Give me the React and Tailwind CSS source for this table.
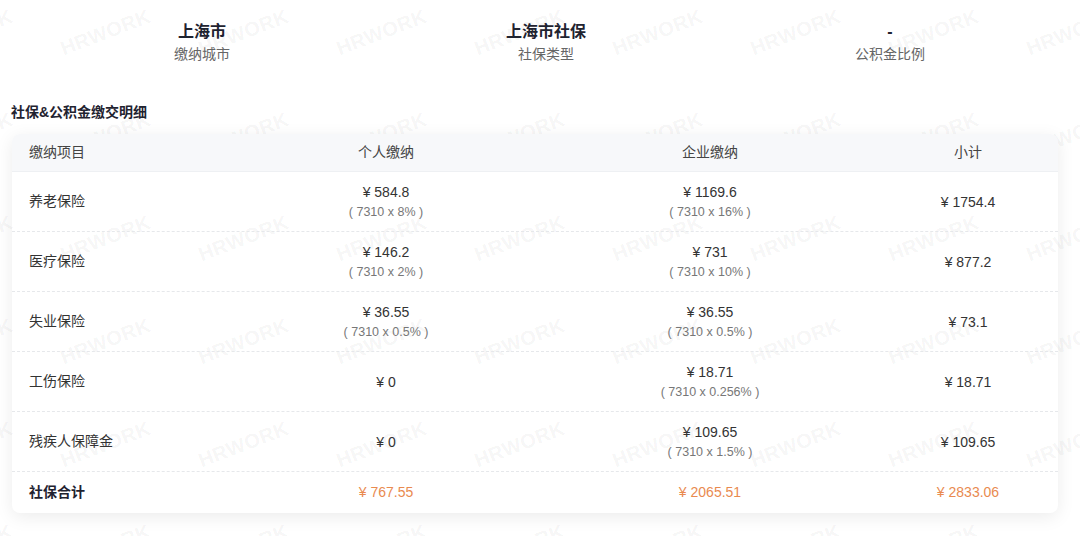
import React from 'react';

const summary = [
  { value: '上海市', label: '缴纳城市' },
  { value: '上海市社保', label: '社保类型' },
  { value: '-', label: '公积金比例' },
];

const rows = [
  { name: '养老保险', p: '¥ 584.8', pf: '( 7310 x 8% )', c: '¥ 1169.6', cf: '( 7310 x 16% )', s: '¥ 1754.4' },
  { name: '医疗保险', p: '¥ 146.2', pf: '( 7310 x 2% )', c: '¥ 731', cf: '( 7310 x 10% )', s: '¥ 877.2' },
  { name: '失业保险', p: '¥ 36.55', pf: '( 7310 x 0.5% )', c: '¥ 36.55', cf: '( 7310 x 0.5% )', s: '¥ 73.1' },
  { name: '工伤保险', p: '¥ 0', c: '¥ 18.71', cf: '( 7310 x 0.256% )', s: '¥ 18.71' },
  { name: '残疾人保障金', p: '¥ 0', c: '¥ 109.65', cf: '( 7310 x 1.5% )', s: '¥ 109.65' },
];

const cols = 'grid grid-cols-[218px_312px_336px_180px]';

const Amount = ({ value, formula }) => (
  <div className="flex flex-col items-center justify-center">
    <span className="text-[14px] leading-5 text-[#333]">{value}</span>
    {formula && <span className="text-[12.5px] leading-5 text-[#777]">{formula}</span>}
  </div>
);

// faint tiled watermark sitting behind the page content
const Watermark = () => (
  <div aria-hidden="true" className="absolute left-[-102px] top-[-20px] grid grid-cols-[repeat(9,138px)] auto-rows-[103px] pointer-events-none select-none">
    {Array.from({ length: 54 }).map((_, i) => (
      <div key={i} className="flex items-center justify-center">
        <span className="rotate-[-21deg] text-[20px] font-bold tracking-[0.5px] text-black/[0.05] font-['Liberation_Sans',sans-serif]">
          HRWORK
        </span>
      </div>
    ))}
  </div>
);

export default function App() {
  return (
    <div className="relative w-full h-[536px] overflow-hidden bg-white font-['Liberation_Sans','Noto_Sans_CJK_SC',sans-serif]">
      <Watermark />

      <div className="relative">
        {/* top summary */}
        <div className="ml-[30px] w-[1032px] grid grid-cols-3 pt-[20px]">
          {summary.map((s) => (
            <div key={s.label} className="flex flex-col items-center">
              <span className="text-[16px] leading-6 font-bold text-[#1f2330]">{s.value}</span>
              <span className="text-[14px] leading-5 text-[#666]">{s.label}</span>
            </div>
          ))}
        </div>

        <h2 className="mt-[38px] ml-[11px] text-[14px] leading-5 font-bold text-[#1f2330]">社保&amp;公积金缴交明细</h2>

        {/* detail table */}
        <div className="mt-[12px] ml-[12px] w-[1046px] rounded-[8px] shadow-[0_4px_18px_rgba(0,0,0,0.08)] overflow-hidden">
          <div className={`${cols} h-[38px] items-center bg-[#f7f8fa] border-b border-[#eef0f3] text-[14px] text-[#444]`}>
            <span className="pl-[17px]">缴纳项目</span>
            <span className="text-center">个人缴纳</span>
            <span className="text-center">企业缴纳</span>
            <span className="text-center">小计</span>
          </div>

          {rows.map((r) => (
            <div key={r.name} className={`${cols} h-[60px] items-center border-b border-dashed border-[#e6e8eb]`}>
              <span className="pl-[17px] text-[14px] text-[#333]">{r.name}</span>
              <Amount value={r.p} formula={r.pf} />
              <Amount value={r.c} formula={r.cf} />
              <Amount value={r.s} />
            </div>
          ))}

          <div className={`${cols} h-[41px] items-center text-[14px]`}>
            <span className="pl-[17px] font-bold text-[#1f2330]">社保合计</span>
            <span className="text-center text-[#e98a4f]">¥ 767.55</span>
            <span className="text-center text-[#e98a4f]">¥ 2065.51</span>
            <span className="text-center text-[#e98a4f]">¥ 2833.06</span>
          </div>
        </div>
      </div>
    </div>
  );
}
